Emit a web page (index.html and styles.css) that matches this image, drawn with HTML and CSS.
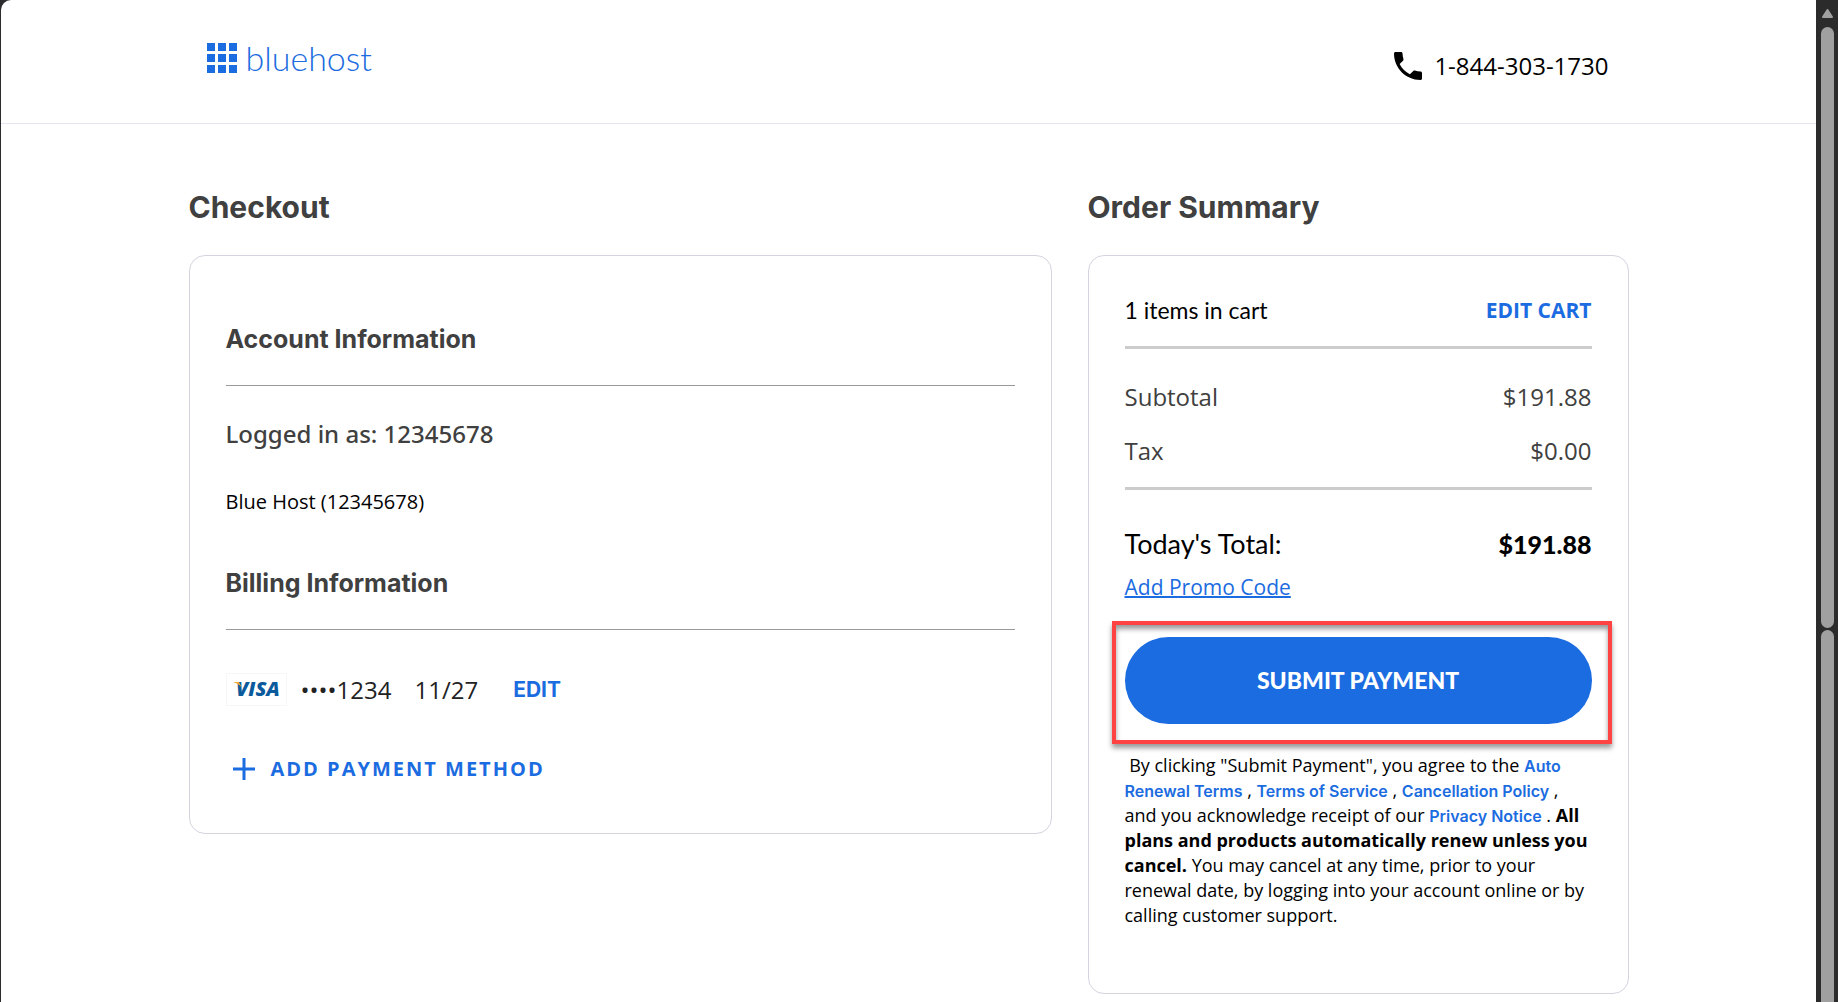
FILE: index.html
```html
<!DOCTYPE html>
<html lang="en">
<head>
<meta charset="utf-8">
<title>Bluehost Checkout</title>
<link rel="stylesheet" href="styles.css">
</head>
<body>
<div class="page">
  <header class="header">
    <div class="header-inner">
      <a class="logo" href="#">
        <svg class="logo-grid" viewBox="0 0 30 30" aria-hidden="true">
          <path d="M0 0h8v8H0zM11 0h8v8h-8zM22 0h8v8h-8zM0 11h8v8H0zM11 11h8v8h-8zM22 11h8v8h-8zM0 22h8v8H0zM11 22h8v8h-8zM22 22h8v8h-8z"/>
        </svg>
        <span>bluehost</span>
      </a>
      <a class="phone" href="tel:18443031730">
        <svg class="phone-icon" viewBox="3 3 18 18" aria-hidden="true">
          <path d="M6.62 10.79c1.44 2.83 3.76 5.14 6.59 6.59l2.2-2.2c.27-.27.67-.36 1.02-.24 1.12.37 2.33.57 3.57.57.55 0 1 .45 1 1V20c0 .55-.45 1-1 1-9.39 0-17-7.61-17-17 0-.55.45-1 1-1h3.500c.55 0 1 .45 1 1 0 1.250.2 2.450.57 3.570.11.35.03.74-.25 1.020l-2.200 2.200z"/>
        </svg>
        <span>1-844-303-1730</span>
      </a>
    </div>
  </header>

  <main class="main">
    <section class="checkout">
      <h1 class="title">Checkout</h1>
      <div class="card checkout-card">
        <h2 class="section-title">Account Information</h2>
        <p class="logged-in">Logged in as: 12345678</p>
        <p class="account">Blue Host (12345678)</p>
        <h2 class="section-title">Billing Information</h2>
        <div class="payment">
          <svg class="visa" viewBox="0 0 61 33" role="img" aria-label="Visa">
            <rect x=".5" y=".5" width="60" height="32" fill="#fff" stroke="#f7f7f7"/>
            <text x="10" y="23" class="visa-text">VISA</text>
            <path d="M7 9h6l3 6c-2-3-5-5-9-6z" fill="#f0a62f"/>
          </svg>
          <span class="card-number">••••1234</span>
          <span class="card-expiry">11/27</span>
          <a class="edit" href="#">EDIT</a>
        </div>
        <button class="add-payment" type="button">
          <svg class="plus" viewBox="0 0 22 22" aria-hidden="true"><path d="M11 0v22M0 11h22"/></svg>
          <span>ADD PAYMENT METHOD</span>
        </button>
      </div>
    </section>

    <section class="summary">
      <h1 class="title">Order Summary</h1>
      <div class="card summary-card">
        <div class="row cart-row"><span class="items">1 items in cart</span><a class="edit-cart" href="#">EDIT CART</a></div>
        <div class="amounts">
          <div class="row"><span>Subtotal</span><span>$191.88</span></div>
          <div class="row"><span>Tax</span><span>$0.00</span></div>
        </div>
        <div class="row total"><span>Today's Total:</span><strong>$191.88</strong></div>
        <a class="promo" href="#">Add Promo Code</a>
        <div class="submit-wrap">
          <button class="submit" type="submit">SUBMIT PAYMENT</button>
          <div class="highlight"></div>
        </div>
        <p class="terms">&nbsp;By clicking "Submit Payment", you agree to the <a href="#">Auto Renewal Terms</a> , <a href="#">Terms of Service</a> , <a href="#">Cancellation Policy</a> , and you acknowledge receipt of our <a href="#">Privacy Notice</a> . <strong>All plans and products automatically renew unless you cancel.</strong> You may cancel at any time, prior to your renewal date, by logging into your account online or by calling customer support.</p>
      </div>
    </section>
  </main>
</div>
<div class="scrollbar" aria-hidden="true">
  <svg class="scroll-up" viewBox="0 0 11 9"><path d="M5.500 1L10 8H1z"/></svg>
  <div class="thumb thumb-first"></div>
  <div class="thumb thumb-second"></div>
</div>
</body>
</html>
```

FILE: styles.css
```css
* { box-sizing: border-box; }

body {
  margin: 0;
  padding-left: 1px;
  display: flex;
  height: 100vh;
  overflow: hidden;
  background: #2c2c2e;
  color: #000;
  font-family: "Open Sans", "Noto Sans", sans-serif;
}

h1, h2, p { margin: 0; }
a { color: #1b6ce0; text-decoration: none; }
button { border: 0; padding: 0; font-family: inherit; cursor: pointer; }

.page {
  flex: 1;
  overflow: hidden;
  background: #fff;
  border-top-left-radius: 10px;
}

.header { border-bottom: 1px solid #e6e6f0; }
.header-inner {
  max-width: 1440px;
  height: 123px;
  margin: 0 auto;
  padding: 0 20px 0 18px;
  display: flex;
  justify-content: space-between;
}
.logo {
  display: flex;
  align-items: center;
  gap: 9px;
  height: 116px;
  font: 300 34px/40px Lato, sans-serif;
}
.logo-grid { width: 30px; height: 30px; fill: #1b6ce0; }
.phone {
  display: flex;
  align-items: center;
  gap: 12px;
  padding-top: 9px;
  color: #000;
  font-size: 24px;
  line-height: 32px;
}
.phone-icon { width: 28px; height: 28px; }

.main {
  max-width: 1440px;
  margin: 0 auto;
  padding-top: 63px;
  display: grid;
  grid-template-columns: 863fr 541fr;
  gap: 36px;
  align-items: start;
}
.title {
  margin-bottom: 28px;
  color: #404040;
  font: 700 30px/40px Inter, sans-serif;
}
.card {
  border: 1px solid #d4d4e0;
  border-radius: 16px;
}

.checkout-card { padding: 67px 36px 48px; }
.section-title {
  padding-bottom: 30px;
  border-bottom: 1px solid #999;
  color: #404040;
  font: 700 25px/32px Inter, sans-serif;
}
.logged-in {
  margin-top: 32px;
  color: #404040;
  font-family: "Noto Sans", sans-serif;
  font-size: 24px;
  font-weight: 500;
  line-height: 32px;
}
.account {
  margin: 36px 0 49px;
  font-size: 20px;
  line-height: 32px;
}
.payment {
  margin-top: 43px;
  display: flex;
  align-items: center;
  height: 33px;
  color: #222;
  font-size: 24px;
}
.visa { width: 61px; height: 33px; }
.visa-text { font: italic 800 20px "Open Sans", sans-serif; fill: #0a5a9c; }
.card-number { margin-left: 14px; }
.card-expiry { margin-left: 23px; }
.edit {
  margin-left: 35px;
  font: 700 21px/32px Inter, sans-serif;
}
.add-payment {
  margin-top: 47px;
  padding-left: 7px;
  display: flex;
  align-items: center;
  gap: 16px;
  background: none;
  color: #1b6ce0;
  font-size: 20px;
  font-weight: 700;
  line-height: 32px;
  letter-spacing: 2px;
}
.plus { width: 22px; height: 22px; stroke: #1b6ce0; stroke-width: 3; }

.summary-card { padding: 38px 36px 65px; }
.row {
  display: flex;
  justify-content: space-between;
  align-items: center;
  line-height: 32px;
}
.cart-row { padding-bottom: 20px; border-bottom: 3px solid #ccc; }
.items { font: 400 23px/32px Lato, sans-serif; }
.edit-cart { font-size: 21px; font-weight: 700; }
.amounts {
  padding: 32px 0 20px;
  display: grid;
  gap: 22px;
  border-bottom: 3px solid #ccc;
  color: #404040;
  font-size: 24px;
}
.total {
  margin: 38px 0 11px;
  font: 400 27px/32px Lato, sans-serif;
}
.total strong { font-size: 25px; font-weight: 900; }
.promo {
  display: table;
  font-size: 21px;
  line-height: 32px;
  text-decoration: underline;
  text-decoration-thickness: 2px;
}
.submit-wrap { position: relative; margin-top: 34px; }
.submit {
  width: 100%;
  height: 87px;
  padding-bottom: 2px;
  border-radius: 44px;
  background: #1b6ce0;
  color: #fff;
  font: 900 23px/32px Lato, sans-serif;
}
.highlight {
  position: absolute;
  inset: -16px -20px -20px -13px;
  border: 4px solid #ff4343;
  box-shadow: 0 4px 5px rgba(0, 0, 0, .4), inset 0 4px 5px rgba(0, 0, 0, .4);
  pointer-events: none;
}
.terms { margin-top: 29px; font-size: 18px; line-height: 25px; }
.terms a { font: 600 16px/24px Inter, sans-serif; }

.scrollbar {
  width: 22px;
  padding: 9px 4px 0 5px;
  display: flex;
  flex-direction: column;
  align-items: center;
  gap: 2px;
  background: #2b2b2b;
}
.scroll-up {
  width: 11px;
  height: 9px;
  margin-bottom: 7px;
  fill: #a0a0a0;
  stroke: #a0a0a0;
  stroke-width: 2;
  stroke-linejoin: round;
}
.thumb { width: 13px; background: #a0a0a0; }
.thumb-first { flex: 21; border-radius: 7px; }
.thumb-second { flex: 13; border-radius: 7px 7px 0 0; }
```
